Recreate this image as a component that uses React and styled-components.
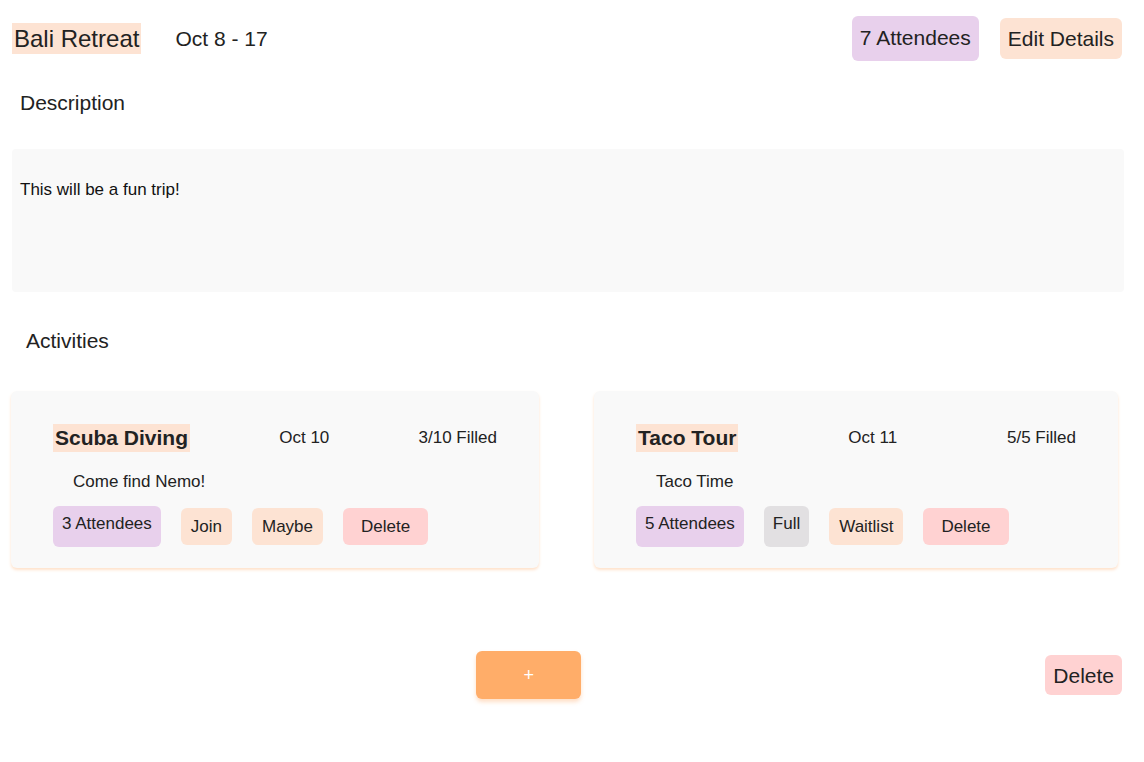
import styled, { createGlobalStyle } from "styled-components";

const GlobalStyle = createGlobalStyle`
    body {
        margin: 0;
        background: #ffffff;
        font-family: "Liberation Sans", Arial, sans-serif;
        color: #222222;
    }
`;

const Page = styled.div`
    display: flex;
    flex-direction: column;
    padding: 16px 22px 40px 12px;
`;

const Header = styled.div`
    display: flex;
    align-items: center;
    height: 45px;
`;

const Title = styled.h1`
    margin: 0;
    font-size: 24px;
    font-weight: normal;
    background: #fde3d3;
    padding: 2px 2px;
    line-height: 27px;
`;

const DateText = styled.span`
    font-size: 21px;
    margin-left: 34px;
`;

const Spacer = styled.div`
    flex: 1;
`;

const colors = {
    purple: "#e8d0ec",
    peach: "#fde3d3",
    pink: "#ffd2d2",
    grey: "#e2e0e2",
};

const Pill = styled.button`
    font-family: inherit;
    color: #222222;
    border: none;
    border-radius: 6px;
    background: ${(p) => colors[p.tone]};
    font-size: ${(p) => (p.big ? 21 : 17)}px;
    line-height: ${(p) => (p.big ? 23 : 20)}px;
    padding: ${(p) => p.pad};
    cursor: pointer;
`;

const HeaderActions = styled.div`
    display: flex;
    align-items: center;
    gap: 21px;
`;

const SectionLabel = styled.h2`
    margin: ${(p) => p.m};
    font-size: 21px;
    font-weight: normal;
    line-height: 24px;
    padding-left: ${(p) => p.indent}px;
`;

const DescBox = styled.div`
    background: #f9f9f9;
    border-radius: 4px;
    height: 143px;
    box-sizing: border-box;
    padding: 31px 8px;
    margin-right: -2px;
    font-size: 17px;
    line-height: 20px;
    color: #111111;
`;

const CardGrid = styled.div`
    display: grid;
    grid-template-columns: 528px 524px;
    gap: 55px;
    margin-left: -1px;
`;

const Card = styled.div`
    background: #f9f9f9;
    border-radius: 6px;
    box-shadow: 0 2px 3px rgba(255, 190, 140, 0.45);
    padding: 33px 42px 21px;
    display: flex;
    flex-direction: column;
`;

const CardTop = styled.div`
    display: flex;
    align-items: center;
    justify-content: space-between;
    font-size: 17px;
`;

const CardTitle = styled.span`
    font-size: 21px;
    font-weight: bold;
    background: #fde3d3;
    padding: 2px 2px;
    line-height: 24px;
`;

const CardDesc = styled.div`
    font-size: 17px;
    line-height: 20px;
    margin: 20px 0 14px 20px;
`;

const CardActions = styled.div`
    display: flex;
    align-items: center;
    gap: 20px;
`;

const Footer = styled.div`
    display: flex;
    align-items: center;
    margin-top: 83px;
`;

const AddWrap = styled.div`
    flex: 1;
    display: flex;
    justify-content: center;
`;

const AddButton = styled.button`
    width: 105px;
    height: 48px;
    border: none;
    border-radius: 6px;
    background: #ffad69;
    color: #ffffff;
    font-family: inherit;
    font-size: 18px;
    box-shadow: 0 3px 4px rgba(255, 160, 90, 0.35);
    cursor: pointer;
`;

const activities = [
    {
        name: "Scuba Diving",
        date: "Oct 10",
        filled: "3/10 Filled",
        desc: "Come find Nemo!",
        attendees: "3 Attendees",
        actions: [
            { label: "Join", tone: "peach" },
            { label: "Maybe", tone: "peach" },
        ],
    },
    {
        name: "Taco Tour",
        date: "Oct 11",
        filled: "5/5 Filled",
        desc: "Taco Time",
        attendees: "5 Attendees",
        actions: [
            { label: "Full", tone: "grey", tall: true },
            { label: "Waitlist", tone: "peach" },
        ],
    },
];

const ActivityCard = ({ a }) => (
    <Card>
        <CardTop>
            <CardTitle>{a.name}</CardTitle>
            <span>{a.date}</span>
            <span>{a.filled}</span>
        </CardTop>
        <CardDesc>{a.desc}</CardDesc>
        <CardActions>
            <Pill tone="purple" pad="8px 9px 13px">
                {a.attendees}
            </Pill>
            {a.actions.map((b) => (
                <Pill key={b.label} tone={b.tone} pad={b.tall ? "8px 9px 13px" : "9px 10px 8px"}>
                    {b.label}
                </Pill>
            ))}
            <Pill tone="pink" pad="9px 18px 8px">
                Delete
            </Pill>
        </CardActions>
    </Card>
);

export default function App() {
    return (
        <>
            <GlobalStyle />
            <Page>
                <Header>
                    <Title>Bali Retreat</Title>
                    <DateText>Oct 8 - 17</DateText>
                    <Spacer />
                    <HeaderActions>
                        <Pill tone="purple" big pad="10px 8px 12px">
                            7 Attendees
                        </Pill>
                        <Pill tone="peach" big pad="9px 8px">
                            Edit Details
                        </Pill>
                    </HeaderActions>
                </Header>
                <SectionLabel m="30px 0 34px" indent={8}>
                    Description
                </SectionLabel>
                <DescBox>This will be a fun trip!</DescBox>
                <SectionLabel m="37px 0 38px" indent={14}>
                    Activities
                </SectionLabel>
                <CardGrid>
                    {activities.map((a) => (
                        <ActivityCard key={a.name} a={a} />
                    ))}
                </CardGrid>
                <Footer>
                    <AddWrap>
                        <AddButton>+</AddButton>
                    </AddWrap>
                    <Pill tone="pink" big pad="9px 8px 8px">
                        Delete
                    </Pill>
                </Footer>
            </Page>
        </>
    );
}
